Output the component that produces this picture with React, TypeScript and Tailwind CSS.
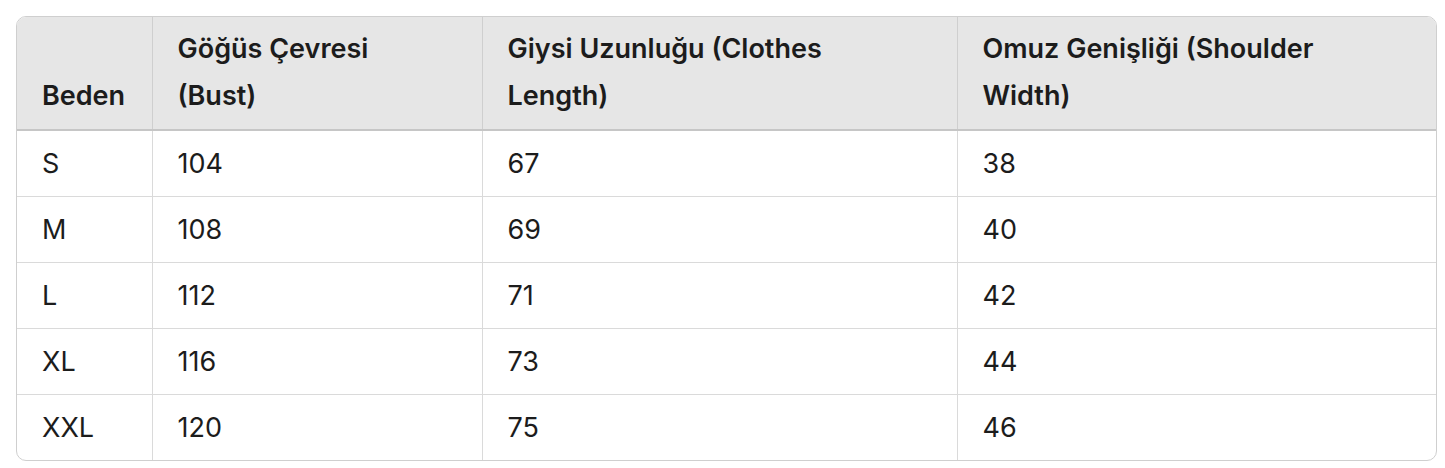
const rows = [
  ["S", "104", "67", "38"],
  ["M", "108", "69", "40"],
  ["L", "112", "71", "42"],
  ["XL", "116", "73", "44"],
  ["XXL", "120", "75", "46"],
]

const heads = ["Beden", "Göğüs Çevresi (Bust)", "Giysi Uzunluğu (Clothes Length)", "Omuz Genişliği (Shoulder Width)"]

export default function App() {
  return (
    <div className="min-h-screen bg-white pt-4 pl-4" style={{ fontFamily: "Inter, 'Noto Sans', sans-serif" }}>
      <div className="w-[1421px] overflow-hidden rounded-[10px] border border-[#cfcfcf]">
        <table className="w-full border-collapse text-[27px] leading-[47px] text-[#1c1c1c]">
          <colgroup>
            <col className="w-[135px]" />
            <col className="w-[330px]" />
            <col className="w-[475px]" />
            <col />
          </colgroup>
          <thead>
            <tr className="bg-[#e6e6e6]">
              {heads.map((h, i) => (
                <th
                  key={h}
                  className={`border-b-2 border-b-[#c6c6c6] px-[25px] pt-[8px] pb-[10px] text-left align-bottom font-semibold ${i > 0 ? "border-l border-l-[#cfcfcf]" : ""}`}
                >
                  <span className={i === 1 ? "block max-w-[250px]" : i > 1 ? "block max-w-[370px]" : ""}>{h}</span>
                </th>
              ))}
            </tr>
          </thead>
          <tbody>
            {rows.map((r, ri) => (
              <tr key={r[0]} className={ri > 0 ? "border-t border-t-[#dadada]" : ""}>
                {r.map((c, ci) => (
                  <td key={ci} className={`px-[25px] py-[9px] ${ci > 0 ? "border-l border-l-[#dadada]" : ""}`}>
                    {c}
                  </td>
                ))}
              </tr>
            ))}
          </tbody>
        </table>
      </div>
    </div>
  )
}
